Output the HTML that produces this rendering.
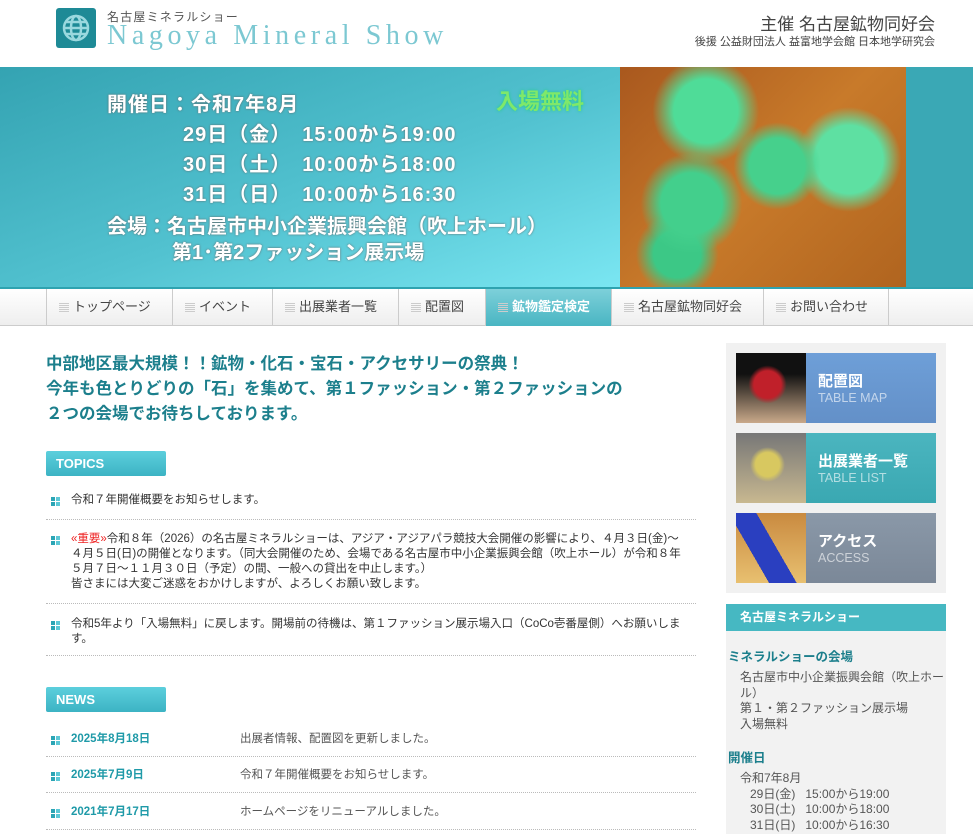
<!DOCTYPE html>
<html><head><meta charset="utf-8">
<style>
*{margin:0;padding:0;box-sizing:border-box}
body{width:973px;height:834px;overflow:hidden;background:#fff;font-family:"Liberation Sans","Noto Sans CJK JP",sans-serif;color:#333;position:relative}
.abs{position:absolute}
.logo{left:56px;top:8px;width:40px;height:40px;background:#1e8a96;border-radius:3px}
.sub{left:107px;top:8px;font-size:12px;color:#555;letter-spacing:1.2px}
.title{left:107px;top:20px;font-family:"Liberation Serif",serif;font-size:28px;color:#7cc8d2;letter-spacing:4.6px;white-space:nowrap}
.host{right:38px;top:10px;font-size:17px;color:#444}
.host2{right:38px;top:33px;font-size:11px;color:#444}
.banner{left:0;top:67px;width:973px;height:220px;background:#3aa8b5}
.bl{left:0;top:67px;width:620px;height:220px;background:linear-gradient(160deg,#34a3b2 0%,#52c2d0 55%,#7ae6f2 100%)}
.img{left:620px;top:67px;width:286px;height:220px;background:radial-gradient(circle at 30% 20%,#4fdc98 0 12%,transparent 20%),radial-gradient(circle at 55% 45%,#46d08c 0 14%,transparent 22%),radial-gradient(circle at 80% 42%,#5ee0a2 0 13%,transparent 20%),radial-gradient(circle at 25% 62%,#43cf8c 0 12%,transparent 20%),radial-gradient(circle at 20% 85%,#3cc886 0 8%,transparent 14%),linear-gradient(135deg,#a9581e,#c87a2a 50%,#b0641f)}
.bt{color:#fff;font-weight:bold;font-size:20px;text-shadow:0 0 2px #666;white-space:nowrap;letter-spacing:1px}
.free{left:496px;top:84px;color:#7fe86a;font-size:22px;font-weight:bold;text-shadow:0 0 3px #2c8;}
.nav{left:0;top:287px;width:973px;height:39px;border-top:2px solid #2ea3b0;background:linear-gradient(#fff,#eee);border-bottom:1px solid #ccc}
.nav div{position:absolute;top:0;height:37px;line-height:36px;font-size:13px;color:#444;border-left:1px solid #ccc;padding-left:12px}
.nav div:before{content:"";display:inline-block;width:10px;height:10px;margin-right:4px;vertical-align:-1px;background:repeating-linear-gradient(0deg,#ccc 0 1px,transparent 1px 2px)}
.nav .on{background:linear-gradient(#7dd0da,#49b5c2);color:#fff;font-weight:bold}
.intro{left:46px;top:352px;font-size:16.5px;font-weight:bold;color:#1c7f8c;line-height:25px}
.badge{width:120px;height:25px;background:linear-gradient(#5ccfdd,#3cb3c4);color:#fff;font-weight:bold;font-size:13px;line-height:25px;padding-left:10px;border-radius:2px}
.item{left:46px;width:650px;font-size:11.5px;line-height:15px;color:#333;padding-left:25px;padding-top:3px;border-bottom:1px dotted #bbb;white-space:nowrap}
.sq{position:absolute;left:5px;width:9px;height:9px;background:linear-gradient(90deg,#2ca5b5 4px,transparent 4px 5px,#5cc8d6 5px);}
.sq:after{content:"";position:absolute;left:0;top:4px;width:9px;height:1px;background:#fff}
.nd{color:#1f9aa8;font-weight:bold;position:absolute;left:25px}
.nt{color:#555;position:absolute;left:194px}
.side{left:726px;top:343px;width:220px;height:250px;background:#f1f1f1}
.bn{left:736px;width:200px;height:70px;color:#fff}
.bn .p{position:absolute;left:0;top:0;width:70px;height:70px}
.bn .j{position:absolute;left:82px;top:17px;font-size:15px;font-weight:bold}
.bn .e{position:absolute;left:82px;top:38px;font-size:12.5px;opacity:.6}
.sh{left:726px;top:604px;width:220px;height:27px;background:#46b8c2;color:#fff;font-weight:bold;font-size:12px;line-height:27px;padding-left:14px}
.sb{left:726px;top:631px;width:220px;height:203px;background:#f2f2f2;font-size:12px;color:#555}
.sb h4{color:#1c7f8c;font-size:12.5px;margin:15px 0 5px 2px}
.sb p{margin-left:14px;line-height:15.5px}
</style></head><body>
<div class="abs logo"><svg width="40" height="40" viewBox="0 0 40 40"><g fill="none" stroke="#9ad8de" stroke-width="2.5"><circle cx="20" cy="20" r="12"/><ellipse cx="20" cy="20" rx="5" ry="12"/><line x1="8" y1="20" x2="32" y2="20"/><line x1="10" y1="14" x2="30" y2="14"/><line x1="10" y1="26" x2="30" y2="26"/></g></svg></div>
<div class="abs sub">名古屋ミネラルショー</div>
<div class="abs title">Nagoya Mineral Show</div>
<div class="abs host">主催 名古屋鉱物同好会</div>
<div class="abs host2">後援 公益財団法人 益富地学会館 日本地学研究会</div>

<div class="abs banner"></div>
<div class="abs bl"></div>
<div class="abs img"></div>
<div class="abs bt" style="left:107px;top:88px">開催日：令和7年8月</div>
<div class="abs bt" style="left:183px;top:118px">29日（金）　15:00から19:00</div>
<div class="abs bt" style="left:183px;top:148px">30日（土）　10:00から18:00</div>
<div class="abs bt" style="left:183px;top:178px">31日（日）　10:00から16:30</div>
<div class="abs bt" style="left:107px;top:210px;letter-spacing:0">会場：名古屋市中小企業振興会館（吹上ホール）</div>
<div class="abs bt" style="left:172px;top:236px;letter-spacing:0">第1･第2ファッション展示場</div>
<div class="abs free">入場無料</div>

<div class="abs nav">
<div style="left:46px;width:126px">トップページ</div>
<div style="left:172px;width:100px">イベント</div>
<div style="left:272px;width:126px">出展業者一覧</div>
<div style="left:398px;width:87px">配置図</div>
<div class="on" style="left:485px;width:126px">鉱物鑑定検定</div>
<div style="left:611px;width:152px">名古屋鉱物同好会</div>
<div style="left:763px;width:126px;border-right:1px solid #ccc">お問い合わせ</div>
</div>

<div class="abs intro">中部地区最大規模！！鉱物・化石・宝石・アクセサリーの祭典！<br>今年も色とりどりの「石」を集めて、第１ファッション・第２ファッションの<br>２つの会場でお待ちしております。</div>

<div class="abs badge" style="left:46px;top:451px">TOPICS</div>
<div class="abs item" style="top:490px;height:30px"><span class="sq" style="top:7px"></span>令和７年開催概要をお知らせします。</div>
<div class="abs item" style="top:529px;height:75px"><span class="sq" style="top:7px"></span><span style="color:#e22">«重要»</span>令和８年（2026）の名古屋ミネラルショーは、アジア・アジアパラ競技大会開催の影響により、４月３日(金)～<br>４月５日(日)の開催となります。（同大会開催のため、会場である名古屋市中小企業振興会館（吹上ホール）が令和８年<br>５月７日～１１月３０日（予定）の間、一般への貸出を中止します。）<br>皆さまには大変ご迷惑をおかけしますが、よろしくお願い致します。</div>
<div class="abs item" style="top:614px;height:42px"><span class="sq" style="top:7px"></span>令和5年より「入場無料」に戻します。開場前の待機は、第１ファッション展示場入口（CoCo壱番屋側）へお願いしま<br>す。</div>

<div class="abs badge" style="left:46px;top:687px">NEWS</div>
<div class="abs item" style="top:729px;height:28px"><span class="sq" style="top:7px"></span><span class="nd">2025年8月18日</span><span class="nt">出展者情報、配置図を更新しました。</span></div>
<div class="abs item" style="top:765px;height:28px"><span class="sq" style="top:7px"></span><span class="nd">2025年7月9日</span><span class="nt">令和７年開催概要をお知らせします。</span></div>
<div class="abs item" style="top:802px;height:28px"><span class="sq" style="top:7px"></span><span class="nd">2021年7月17日</span><span class="nt">ホームページをリニューアルしました。</span></div>

<div class="abs side"></div>
<div class="abs bn" style="top:353px;background:linear-gradient(#6e9fd8,#6390c8)"><div class="p" style="background:radial-gradient(circle at 45% 45%,#c0202a 0 25%,transparent 35%),linear-gradient(#111 30%,#c9a98a)"></div><div class="j">配置図</div><div class="e">TABLE MAP</div></div>
<div class="abs bn" style="top:433px;background:linear-gradient(#4bb5bf,#3aa8b2)"><div class="p" style="background:radial-gradient(circle at 45% 45%,#d8c860 0 22%,transparent 32%),linear-gradient(#777,#c8b890)"></div><div class="j">出展業者一覧</div><div class="e">TABLE LIST</div></div>
<div class="abs bn" style="top:513px;background:linear-gradient(#8a98a8,#7b8898)"><div class="p" style="background:linear-gradient(60deg,transparent 30%,#2a3fc0 30% 55%,transparent 55%),linear-gradient(#c98a40,#e8c070)"></div><div class="j">アクセス</div><div class="e">ACCESS</div></div>

<div class="abs sh">名古屋ミネラルショー</div>
<div class="abs sb">
<h4>ミネラルショーの会場</h4>
<p>名古屋市中小企業振興会館（吹上ホール）<br>第１・第２ファッション展示場<br>入場無料</p>
<h4>開催日</h4>
<p>令和7年8月<br>&nbsp;&nbsp;&nbsp;29日(金)&nbsp;&nbsp;&nbsp;15:00から19:00<br>&nbsp;&nbsp;&nbsp;30日(土)&nbsp;&nbsp;&nbsp;10:00から18:00<br>&nbsp;&nbsp;&nbsp;31日(日)&nbsp;&nbsp;&nbsp;10:00から16:30</p>
</div>
</body></html>
